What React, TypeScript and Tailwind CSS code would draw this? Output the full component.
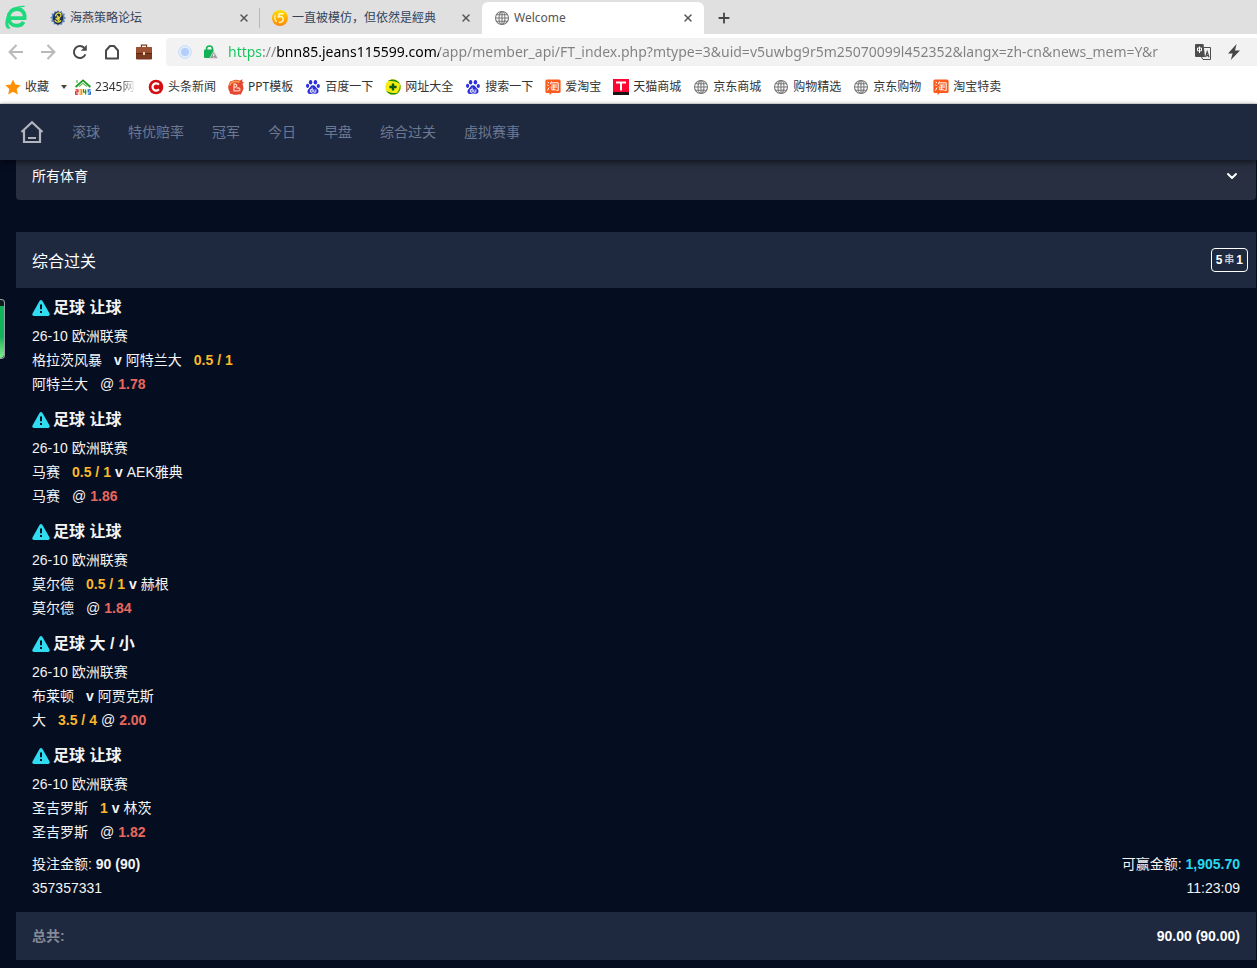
import React, { useState } from 'react';
import { ChevronDown, Plus, X } from 'lucide-react';

type IconProps = { className?: string };

const GlobeIcon = ({ className = 'size-4' }: IconProps) => (
  <svg viewBox="0 0 16 16" className={className} fill="none" stroke="#777" strokeWidth="1.1">
    <circle cx="8" cy="8" r="6.5" />
    <ellipse cx="8" cy="8" rx="3" ry="6.5" />
    <path d="M8 1.5v13M1.5 8h13M2.5 4.8h11M2.5 11.2h11" />
  </svg>
);

const BrowserLogo = () => (
  <svg viewBox="0 0 24 26" className="h-[26px] w-6" fill="none">
    <path d="M5 14.2h15.6C21.4 8.4 17.6 5 13 5 8 5 4.6 8.8 4.6 13.4c0 5 3.6 8.2 8.2 8.2 3.2 0 5.6-1.4 6.8-3.8" stroke="#1fd97c" strokeWidth="3.8" />
    <path d="M2.8 13C4.5 6 12 1.4 20 1.8c.8 0 1 .7.4 1.2C14 2.6 7.5 6 4.6 12z" fill="#1fd97c" />
    <path d="M3 12C.8 17 .6 22 3.4 24.4c1 .6 2.4.2 3.4-.4C4 22 3.6 18 5 14z" fill="#1fd97c" />
  </svg>
);

const SwallowIcon = () => (
  <svg viewBox="0 0 16 16" className="size-4">
    <path d="M8 0l1.3 2L12 1l.4 2.4 2.6.4-1 2.4 2 1.8-2 1.6 1 2.4-2.6.6-.4 2.4-2.6-.8L8 16l-1.6-2-2.6.6-.2-2.6-2.6-.6L2 9 0 7.6l2.2-1.4L1.6 3.6l2.4-.2L4.6 1l2.2 1z" fill="#5e86bb" />
    <ellipse cx="8" cy="8" rx="5" ry="6.4" fill="#1c3050" />
    <path d="M5.4 6.4C5.6 4 7.4 2.6 9.4 3c1.8.4 2 2.4.8 4M4.8 10c1 2.6 4.8 3 6.2.4M6.8 5.6L10 8.2M5.6 8l3.6 3M7 7.6l2.6 2" fill="none" stroke="#e7da3e" strokeWidth="1.3" />
  </svg>
);

const FiveIcon = () => (
  <svg viewBox="0 0 16 16" className="size-4">
    <defs>
      <linearGradient id="five" x1="0" y1="0" x2="0" y2="1">
        <stop offset="0" stopColor="#ffe000" />
        <stop offset="1" stopColor="#ff8400" />
      </linearGradient>
    </defs>
    <circle cx="8" cy="8" r="8" fill="url(#five)" />
    <path d="M11.6 3.8H7.2L6.4 7c3-1.2 5 .2 4.8 2.6-.2 2.2-2.2 3.2-4.4 2.6" fill="none" stroke="#fff6c8" strokeWidth="1.5" />
    <path d="M3.4 5c-1 2.4-.4 5.2 1.4 7" fill="none" stroke="#fff6c8" strokeWidth="1.2" />
  </svg>
);

const ReloadIcon = () => (
  <svg viewBox="0 0 16 16" className="size-4" fill="none">
    <path d="M13.4 10.4A6 6 0 1 1 12.2 3.8" stroke="#4a4a4a" strokeWidth="2" />
    <path d="M14.8.8v6H8.8z" fill="#4a4a4a" />
  </svg>
);

const BriefcaseIcon = () => (
  <svg viewBox="0 0 16 16" className="size-4">
    <path d="M5.4 3.4V1.2h5.2v2.2" fill="none" stroke="#7d3c22" strokeWidth="1.2" />
    <rect x="0" y="3" width="16" height="12.4" rx="1.2" fill="#7b3b23" />
    <rect x="0" y="3" width="16" height="6.4" rx="1.2" fill="#9c5232" />
    <path d="M0 9.4h16" stroke="#5c2715" strokeWidth="1" />
    <rect x="7" y="8" width="2" height="3" fill="#ecd9b4" />
  </svg>
);

const Site2345Icon = () => (
  <svg viewBox="0 0 16 16" className="size-4" fill="none">
    <path d="M.6 8L8 1.4 15.4 8" stroke="#1f9a22" strokeWidth="1.8" />
    <path d="M4 7.6L8 4.4l4 3.2M2 1v3" stroke="#5bb84e" strokeWidth="1.2" />
    <path d="M.5 10.8H3v2H.6v2.4H3.2" stroke="#e2231a" strokeWidth="1.2" />
    <path d="M4.4 10.8h2.4v4.4H4.4M4.6 13h2" stroke="#f08a00" strokeWidth="1.2" />
    <path d="M8.6 10v3.2h2.8M10.6 10.4v5" stroke="#1f9a22" strokeWidth="1.2" />
    <path d="M15.6 10.8h-2.4V13h2.2v2.2h-2.6" stroke="#1766c9" strokeWidth="1.2" />
  </svg>
);

const ToutiaoIcon = () => (
  <svg viewBox="0 0 16 16" className="size-4">
    <circle cx="8" cy="8" r="7.3" fill="#d30d12" />
    <path d="M10.9 5.7A3.6 3.6 0 1 0 10.9 10.3" fill="none" stroke="#fff" strokeWidth="2.2" />
  </svg>
);

const PptIcon = () => (
  <svg viewBox="0 0 16 16" className="size-4">
    <path d="M4 2C7 .4 10 .6 11.6 1.8L14.4.2l-.2 2.6 1.8.4L14.4 5c1.6 3 1.2 6-.6 8.2l-.8 2.4-2-.4c-2.6 1-5.2.8-7-.2l-2-.2-.4-2C0 10.4-.2 7.6.8 5.400L2 2.6z" fill="#e5462f" />
    <path d="M1.6 6.4C3 2.4 8 1.6 11.4 3.4" stroke="#f79a4c" strokeWidth="1.8" fill="none" />
    <path d="M6 4.4v7.400h5c1.400-.2 1.200-2.800-.4-2.800H8.600M6 5c3.600-.2 3.600 3.200 0 3.400" fill="none" stroke="#ffc9b6" strokeWidth="1.3" />
  </svg>
);

const BaiduIcon = () => (
  <svg viewBox="0 0 16 16" className="size-4" fill="#2b2fd8">
    <ellipse cx="5.6" cy="3.2" rx="1.7" ry="2.3" />
    <ellipse cx="10.4" cy="3.2" rx="1.7" ry="2.3" />
    <ellipse cx="2.6" cy="6.8" rx="1.6" ry="2.1" />
    <ellipse cx="13.3" cy="7" rx="1.6" ry="2.1" />
    <path d="M8 6.2c2.2 0 2.8 2.2 4.4 3.6 2 1.8 1.2 5-1.2 5-1.4 0-2-.4-3.2-.4s-2 .6-3.4.5c-2.4-.2-2.8-3.4-1-5C5.2 8.4 5.8 6.2 8 6.2z" />
    <path d="M7.2 8.6v4.6H5.4v-2.6h1.8M8.8 10.4v2.8h2v-2.8" fill="none" stroke="#fff" strokeWidth=".9" />
  </svg>
);

const Site360Icon = () => (
  <svg viewBox="0 0 16 16" className="size-4">
    <circle cx="8" cy="8" r="7.8" fill="#f7ee0c" />
    <path d="M3 2c4-3 10-1.4 12 3-3-2.6-7-3.4-12-3zM13 14c-4 3-10 1.6-12-2.6 3 2.2 7 3 12 2.6z" fill="#178a1c" />
    <path d="M15 5c1.2 3 .8 6.4-2 9l-1.6.2C14 11.6 14.6 8.4 15 5z" fill="#4aa81e" />
    <path d="M8 4.4v7.2M4.4 8h7.2" stroke="#0d5b14" strokeWidth="2.4" />
  </svg>
);

const TaobaoIcon = () => (
  <svg viewBox="0 0 16 16" className="size-4">
    <path d="M2 .4h12A1.6 1.6 0 0 1 15.6 2v10.4A1.6 1.6 0 0 1 14 14H6.600L4.800 16l-.4-2H2A1.600 1.600 0 0 1 .4 12.400V2A1.600 1.600 0 0 1 2 .4z" fill="#fb5a1c" />
    <path d="M2.6 3l1.4 1M2.2 5.8l1.4.8M2.4 11.6L4 8.6M6.6 2.4L5.2 5.2M6 3.8h7.2v7.6h-1.8M6.4 6h5.400M5.600 8h6.400M8.800 6v4.800M6.800 8.800v2h4" fill="none" stroke="#fff" strokeWidth="1" />
  </svg>
);

const TmallIcon = () => (
  <svg viewBox="0 0 16 16" className="size-4">
    <rect width="16" height="16" fill="#ff0533" />
    <rect y="13" width="16" height="3" fill="#151515" />
    <path d="M3 3.4h10M8 3.4v8" stroke="#fff" strokeWidth="2" />
  </svg>
);

const WarningIcon = () => (
  <svg viewBox="0 0 18 16" className="h-4 w-[18px] shrink-0">
    <path d="M7.5 1.1Q9-.9 10.5 1.1L17.5 13.4Q18.3 15.8 16 16H2Q-.3 15.8.5 13.4z" fill="#2fdcf2" />
    <path d="M9 4.4v4.8M9 11v2" stroke="#050d21" strokeWidth="2" />
  </svg>
);

const TranslateIcon = () => (
  <svg viewBox="0 0 16 16" className="size-4" fill="none">
    <path d="M9 3.5h6.5v12H8L6.5 13" stroke="#4d4d4d" />
    <path d="M1 0h7.5L10 13H1a1 1 0 0 1-1-1V1a1 1 0 0 1 1-1z" fill="#4d4d4d" />
    <path d="M2.500 4h4v2.800h-4zM4.500 2.500v6.500" stroke="#fff" />
    <path d="M10.6 13.2l1.600-5.400 1.800 5.400M11 11.600h2.400" stroke="#4d4d4d" strokeWidth="1.2" />
  </svg>
);

const tabs = [
  { title: '海燕策略论坛', icon: <SwallowIcon />, active: false },
  { title: '一直被模仿，但依然是經典', icon: <FiveIcon />, active: false },
  { title: 'Welcome', icon: <GlobeIcon />, active: true },
];

const bookmarks = [
  { label: '头条新闻', icon: <ToutiaoIcon /> },
  { label: 'PPT模板', icon: <PptIcon /> },
  { label: '百度一下', icon: <BaiduIcon /> },
  { label: '网址大全', icon: <Site360Icon /> },
  { label: '搜索一下', icon: <BaiduIcon /> },
  { label: '爱淘宝', icon: <TaobaoIcon /> },
  { label: '天猫商城', icon: <TmallIcon /> },
  { label: '京东商城', icon: <GlobeIcon /> },
  { label: '购物精选', icon: <GlobeIcon /> },
  { label: '京东购物', icon: <GlobeIcon /> },
  { label: '淘宝特卖', icon: <TaobaoIcon /> },
];

const navItems = ['滚球', '特优赔率', '冠军', '今日', '早盘', '综合过关', '虚拟赛事'];

type Bet = {
  market: string;
  home: string;
  homeLine?: string;
  away: string;
  awayLine?: string;
  pick: string;
  pickLine?: string;
  odds: string;
};

const bets: Bet[] = [
  { market: '让球', home: '格拉茨风暴', away: '阿特兰大', awayLine: '0.5 / 1', pick: '阿特兰大', odds: '1.78' },
  { market: '让球', home: '马赛', homeLine: '0.5 / 1', away: 'AEK雅典', pick: '马赛', odds: '1.86' },
  { market: '让球', home: '莫尔德', homeLine: '0.5 / 1', away: '赫根', pick: '莫尔德', odds: '1.84' },
  { market: '大 / 小', home: '布莱顿', away: '阿贾克斯', pick: '大', pickLine: '3.5 / 4', odds: '2.00' },
  { market: '让球', home: '圣吉罗斯', homeLine: '1', away: '林茨', pick: '圣吉罗斯', odds: '1.82' },
];

function BrowserChrome() {
  const [url, setUrl] = useState(
    'https://bnn85.jeans115599.com/app/member_api/FT_index.php?mtype=3&uid=v5uwbg9r5m25070099l452352&langx=zh-cn&news_mem=Y&r'
  );

  return (
    <div className="bg-white font-['Noto_Sans','Noto_Sans_CJK_SC',sans-serif] text-xs text-[#333]">
      {/* Tabs */}
      <div className="flex h-[34px] items-end bg-[#e0e0e0]">
        <div className="flex h-full w-[38px] items-center pl-1">
          <BrowserLogo />
        </div>
        {tabs.map((tab, i) => (
          <div
            key={tab.title}
            className={`relative flex h-8 w-[222px] items-center gap-1 pr-2.5 pl-3 ${
              tab.active ? 'rounded-t-md bg-white text-[#555]' : 'text-[#34445c]'
            }`}
          >
            {tab.icon}
            <span className="flex-1 truncate">{tab.title}</span>
            <button aria-label="关闭标签页" className="text-[#555]">
              <X className="size-3" strokeWidth={3} />
            </button>
            {i === 0 && <span className="absolute inset-y-1.5 right-0 w-px bg-[#b8b8b8]" />}
          </div>
        ))}
        <button aria-label="新标签页" className="ml-3 flex h-8 items-center text-[#444]">
          <Plus className="size-4" strokeWidth={2.75} />
        </button>
      </div>

      {/* Toolbar */}
      <div className="flex h-9 items-center">
        <button aria-label="后退" className="flex w-8 justify-center">
          <svg viewBox="0 0 16 16" className="size-4" fill="none" stroke="#b9b9b9" strokeWidth="2">
            <path d="M15 8H2M8.5 1L1.6 8l6.9 7" />
          </svg>
        </button>
        <button aria-label="前进" className="flex w-8 justify-center">
          <svg viewBox="0 0 16 16" className="size-4" fill="none" stroke="#b9b9b9" strokeWidth="2">
            <path d="M1 8h13M7.5 1l6.9 7-6.9 7" />
          </svg>
        </button>
        <button aria-label="刷新" className="flex w-8 justify-center">
          <ReloadIcon />
        </button>
        <button aria-label="主页" className="flex w-8 justify-center">
          <svg viewBox="0 0 16 16" className="size-4" fill="none" stroke="#4a4a4a" strokeWidth="2" strokeLinejoin="round">
            <path d="M2 14.5v-8L6 2h4l4 4.5v8z" />
          </svg>
        </button>
        <button aria-label="工具箱" className="flex w-8 justify-center">
          <BriefcaseIcon />
        </button>
        <div className="ml-1.5 flex h-7 flex-1 items-center rounded-l bg-[#f2f2f2] pr-4 pl-3">
          <svg viewBox="0 0 14 14" className="size-3.5">
            <circle cx="7" cy="7" r="6.3" fill="#e3edfd" stroke="#c5daFb" />
            <circle cx="7" cy="7" r="4" fill="#b4cefb" />
          </svg>
          <svg viewBox="0 0 14 14" className="mr-2.5 ml-3 size-3.5">
            <path d="M2.5 5.5V4a3 3 0 0 1 6 0v1.5" fill="none" stroke="#12b155" strokeWidth="1.6" />
            <rect x="0" y="4.6" width="9.6" height="8.4" rx="1" fill="#12b155" />
            <path d="M9.8 6l4.2 7.6H5.6z" fill="#999" stroke="#f2f2f2" strokeWidth=".6" />
            <path d="M9.8 8.6V11M9.8 11.8v1" stroke="#fff" />
          </svg>
          <input
            aria-label="地址"
            value={url}
            onChange={(e) => setUrl(e.target.value)}
            className="min-w-0 flex-1 bg-[linear-gradient(90deg,#16c45c_0_36px,#808080_36px_49px,#000_49px_211px,#808080_211px)] bg-clip-text text-sm text-transparent outline-none"
          />
          <button aria-label="翻译" className="ml-2">
            <TranslateIcon />
          </button>
          <button aria-label="极速模式" className="ml-4">
            <svg viewBox="0 0 14 16" className="h-4 w-3.5">
              <path d="M9.6 0L1 9.4h4.6L3.8 16 13 6.400H8z" fill="#454545" />
            </svg>
          </button>
        </div>
      </div>

      {/* Bookmarks */}
      <div className="flex h-[34px] items-center gap-3 border-b border-[#e4e4e4] pl-[5px] whitespace-nowrap">
        <a href="#fav" className="flex items-center gap-1">
          <svg viewBox="0 0 16 16" className="size-4" fill="#ff9000">
            <path d="M8 .5l2.3 5 5.4.7-4 3.7 1.1 5.500L8 12.700l-4.800 2.700 1.100-5.500-4-3.700 5.400-.7z" />
          </svg>
          收藏
          <svg viewBox="0 0 6 4" className="ml-2 h-1 w-1.5" fill="#444">
            <path d="M0 0h6L3 4z" />
          </svg>
        </a>
        <a href="#2345" className="-ml-1 flex items-center gap-1">
          <Site2345Icon />
          <span className="w-[41px] mask-r-from-60%">2345网</span>
        </a>
        {bookmarks.map((item) => (
          <a key={item.label} href={`#${item.label}`} className="flex items-center gap-1">
            {item.icon}
            {item.label}
          </a>
        ))}
      </div>
    </div>
  );
}

function BetRow({ bet }: { bet: Bet }) {
  return (
    <article className="px-4 pb-1 leading-6">
      <h3 className="flex h-9 items-center gap-[3px] pt-1 text-base font-bold">
        <WarningIcon />
        足球 {bet.market}
      </h3>
      <p>26-10 欧洲联赛</p>
      <p className="flex gap-1">
        <span className="mr-2">{bet.home}</span>
        {bet.homeLine && <b className="text-[#fbb829]">{bet.homeLine}</b>}
        <b>v</b>
        <span>{bet.away}</span>
        {bet.awayLine && <b className="ml-2 text-[#fbb829]">{bet.awayLine}</b>}
      </p>
      <p className="flex gap-1">
        <span className="mr-2">{bet.pick}</span>
        {bet.pickLine && <b className="text-[#fbb829]">{bet.pickLine}</b>}
        <span>@</span>
        <b className="text-[#e8685e]">{bet.odds}</b>
      </p>
    </article>
  );
}

export default function App() {
  return (
    <div className="relative min-h-screen bg-[#050d21] font-['Liberation_Sans','Noto_Sans_CJK_SC',sans-serif] text-sm text-[#f4f4f4]">
      <BrowserChrome />

      <nav className="relative z-10 flex h-14 items-center gap-7 bg-[#1e2940] pl-5 text-[#6d7890] shadow-[0_2px_6px_rgba(0,0,0,0.6)]">
        <a href="#home" aria-label="首页">
          <svg viewBox="0 0 24 24" className="size-6" fill="none" stroke="#b2b5bc" strokeWidth="2.2">
            <path d="M1.5 12L12 2.2 22.5 12M4 10v12h16V10M8 18h8" />
          </svg>
        </a>
        {navItems.map((item) => (
          <a key={item} href={`#${item}`}>
            {item}
          </a>
        ))}
      </nav>

      <main className="pr-px pl-4">
        {/* Scrolled a little way under the nav */}
        <div className="-mt-2 grid items-center rounded-sm bg-[#272f40]">
          <select
            aria-label="体育项目"
            className="col-start-1 row-start-1 h-12 appearance-none px-4 text-white outline-none"
          >
            <option>所有体育</option>
          </select>
          <ChevronDown className="pointer-events-none col-start-1 row-start-1 mr-4 size-4 justify-self-end text-white" strokeWidth={3} />
        </div>

        <section className="mt-8">
          <header className="flex h-14 items-center justify-between bg-[#1e2940] pr-2 pl-4">
            <h2 className="pt-1 text-base text-white">综合过关</h2>
            <span className="flex h-6 items-center gap-0.5 rounded-sm border border-white px-1 text-xs font-bold text-white">
              5<span className="text-[10px] text-[#c4c8d2]">串</span>1
            </span>
          </header>

          {bets.map((bet) => (
            <BetRow key={bet.home} bet={bet} />
          ))}

          <div className="flex justify-between px-4 pt-1 pb-3 leading-6">
            <div>
              <p>
                投注金额: <b>90 (90)</b>
              </p>
              <p>357357331</p>
            </div>
            <div className="text-right">
              <p>
                可赢金额: <b className="text-[#2bd9ee]">1,905.70</b>
              </p>
              <p>11:23:09</p>
            </div>
          </div>

          <footer className="flex h-12 items-center justify-between bg-[#1e2940] px-4 font-bold">
            <span className="text-[#858a97]">总共:</span>
            <span className="text-white">90.00 (90.00)</span>
          </footer>
        </section>
      </main>

      {/* Side widget docked to the window edge */}
      <div className="absolute top-[299px] left-0 h-[60px] w-[5px] rounded-r border-y border-r border-[#9aa0a8] bg-[#101820] pt-1.5">
        <div className="h-full rounded-br bg-gradient-to-b from-[#0fb45c] from-60% to-[#7df08a]" />
      </div>
    </div>
  );
}
